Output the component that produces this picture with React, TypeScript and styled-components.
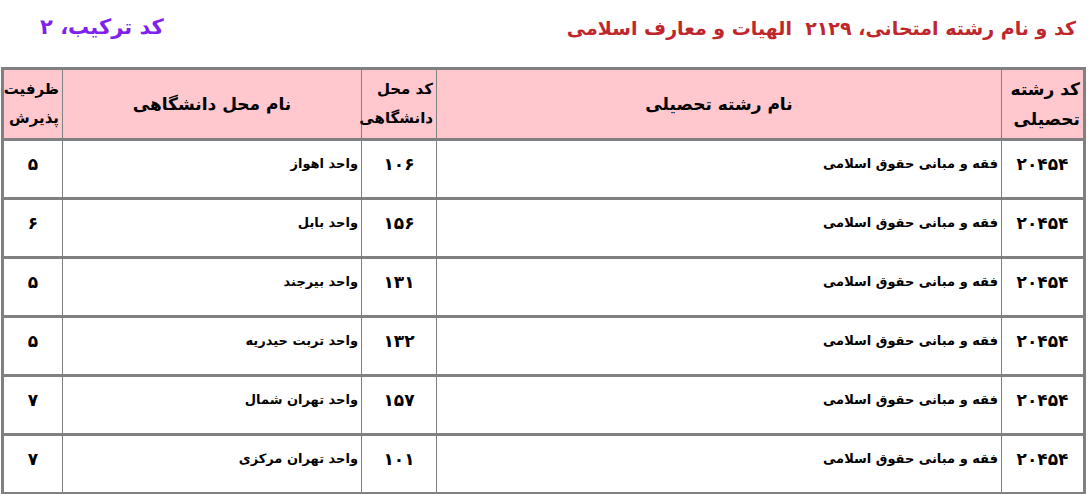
import React from 'react';
import { styled, createGlobalStyle } from 'styled-components';

const GlobalStyle = createGlobalStyle`
  body {
    margin: 0;
    background: #fff;
    font-family: Tahoma, "DejaVu Sans", sans-serif;
  }
`;

interface RowProps {
  code: string;
  major: string;
  placeCode: string;
  place: string;
  capacity: string;
}

const rows: RowProps[] = [
  { code: '۲۰۴۵۴', major: 'فقه و مبانی حقوق اسلامی', placeCode: '۱۰۶', place: 'واحد اهواز', capacity: '۵' },
  { code: '۲۰۴۵۴', major: 'فقه و مبانی حقوق اسلامی', placeCode: '۱۵۶', place: 'واحد بابل', capacity: '۶' },
  { code: '۲۰۴۵۴', major: 'فقه و مبانی حقوق اسلامی', placeCode: '۱۳۱', place: 'واحد بیرجند', capacity: '۵' },
  { code: '۲۰۴۵۴', major: 'فقه و مبانی حقوق اسلامی', placeCode: '۱۳۲', place: 'واحد تربت حیدریه', capacity: '۵' },
  { code: '۲۰۴۵۴', major: 'فقه و مبانی حقوق اسلامی', placeCode: '۱۵۷', place: 'واحد تهران شمال', capacity: '۷' },
  { code: '۲۰۴۵۴', major: 'فقه و مبانی حقوق اسلامی', placeCode: '۱۰۱', place: 'واحد تهران مرکزی', capacity: '۷' },
];

const App = () => {
  return (
    <>
      <GlobalStyle />
      <StyledPage dir="rtl">
        <StyledTop>
          <StyledTitle>کد و نام رشته امتحانی، ۲۱۲۹&nbsp; الهیات و معارف اسلامی</StyledTitle>
          <StyledCombo>کد ترکیب، ۲</StyledCombo>
        </StyledTop>
        <StyledTable>
          <colgroup>
            <col style={{ width: 83 }} />
            <col style={{ width: 565 }} />
            <col style={{ width: 75 }} />
            <col style={{ width: 299 }} />
            <col style={{ width: 60 }} />
          </colgroup>
          <thead>
            <tr>
              <StyledHead>کد رشته<br />تحصیلی</StyledHead>
              <StyledHead $center>نام رشته تحصیلی</StyledHead>
              <StyledHead $small>کد محل<br />دانشگاهی</StyledHead>
              <StyledHead $center>نام محل دانشگاهی</StyledHead>
              <StyledHead $small>ظرفیت<br />پذیرش</StyledHead>
            </tr>
          </thead>
          <tbody>
            {rows.map((r, i) => (
              <tr key={i}>
                <StyledNum>{r.code}</StyledNum>
                <StyledName>{r.major}</StyledName>
                <StyledNum>{r.placeCode}</StyledNum>
                <StyledName>{r.place}</StyledName>
                <StyledNum>{r.capacity}</StyledNum>
              </tr>
            ))}
          </tbody>
        </StyledTable>
      </StyledPage>
    </>
  );
};

const StyledPage = styled.div`
  width: 1088px;
  height: 494px;
  overflow: hidden;
`;
const StyledTop = styled.div`
  height: 67px;
  display: flex;
  justify-content: space-between;
  align-items: flex-start;
  padding: 11px 12px 0 40px;
  box-sizing: border-box;
`;
const StyledTitle = styled.div`
  color: #c0272d;
  font-weight: bold;
  font-size: 19px;
  line-height: 34px;
`;
const StyledCombo = styled.div`
  color: #7f1ff0;
  font-weight: bold;
  font-size: 21px;
  line-height: 32px;
`;
const StyledTable = styled.table`
  margin-right: 2px;
  width: 1085px;
  border-collapse: collapse;
  table-layout: fixed;
  border: 3px solid #808080;
`;
const StyledHead = styled.th<{ $center?: boolean; $small?: boolean }>`
  background: #ffc7ce;
  height: 68px;
  padding: 0 3px;
  border-left: 1px solid #808080;
  border-bottom: 3px solid #808080;
  font-weight: bold;
  font-size: ${(p) => (p.$small ? '15px' : '17px')};
  line-height: ${(p) => (p.$small ? '29px' : '30px')};
  text-align: ${(p) => (p.$center ? 'center' : 'right')};
  color: #000;
  white-space: nowrap;
`;
const StyledNum = styled.td`
  height: 59px;
  border-left: 1px solid #808080;
  border-bottom: 3px solid #808080;
  text-align: center;
  vertical-align: top;
  padding-top: 13px;
  font-weight: bold;
  font-size: 17px;
  box-sizing: border-box;
`;
const StyledName = styled.td`
  height: 59px;
  border-left: 1px solid #808080;
  border-bottom: 3px solid #808080;
  text-align: right;
  vertical-align: top;
  padding: 15px 3px 0;
  font-weight: bold;
  font-size: 13px;
  box-sizing: border-box;
`;

export default App;
